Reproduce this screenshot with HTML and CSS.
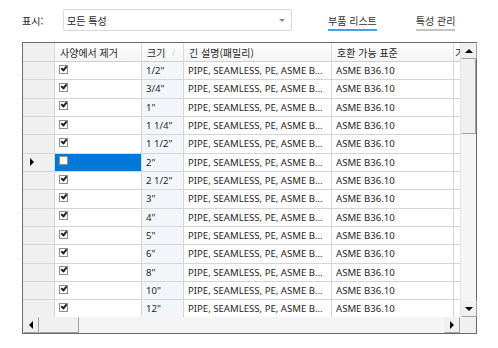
FILE: index.html
```html
<!DOCTYPE html>
<html lang="ko">
<head>
    <meta charset="UTF-8">
    <title>부품 리스트</title>
    <link rel="stylesheet" href="styles.css">
</head>
<body>

<div class="page">
    <!-- Filter bar -->
    <div class="toolbar">
        <span class="label">표시:</span>
        <div class="combo">
            <span>모든 특성</span>
            <span class="combo-arrow"></span>
        </div>
        <a class="tab active">부품 리스트</a>
        <a class="tab">특성 관리</a>
    </div>

    <!-- Parts grid -->
    <div class="grid-box">
        <div class="grid-view">
            <div class="row head">
                <div class="cell rh"></div>
                <div class="cell">사양에서 제거</div>
                <div class="cell">크기<span class="sort">/</span></div>
                <div class="cell">긴 설명(패밀리)</div>
                <div class="cell">호환 가능 표준</div>
                <div class="cell last">기</div>
            </div>
            <div class="row"><div class="cell rh"></div><div class="cell"><span class="chk on"></span></div><div class="cell size">1/2"</div><div class="cell">PIPE, SEAMLESS, PE, ASME B...</div><div class="cell">ASME B36.10</div><div class="cell"></div></div>
            <div class="row"><div class="cell rh"></div><div class="cell"><span class="chk on"></span></div><div class="cell size">3/4"</div><div class="cell">PIPE, SEAMLESS, PE, ASME B...</div><div class="cell">ASME B36.10</div><div class="cell"></div></div>
            <div class="row"><div class="cell rh"></div><div class="cell"><span class="chk on"></span></div><div class="cell size">1"</div><div class="cell">PIPE, SEAMLESS, PE, ASME B...</div><div class="cell">ASME B36.10</div><div class="cell"></div></div>
            <div class="row"><div class="cell rh"></div><div class="cell"><span class="chk on"></span></div><div class="cell size">1 1/4"</div><div class="cell">PIPE, SEAMLESS, PE, ASME B...</div><div class="cell">ASME B36.10</div><div class="cell"></div></div>
            <div class="row"><div class="cell rh"></div><div class="cell"><span class="chk on"></span></div><div class="cell size">1 1/2"</div><div class="cell">PIPE, SEAMLESS, PE, ASME B...</div><div class="cell">ASME B36.10</div><div class="cell"></div></div>
            <div class="row current"><div class="cell rh"><span class="pointer"></span></div><div class="cell selected"><span class="chk"></span></div><div class="cell size">2"</div><div class="cell">PIPE, SEAMLESS, PE, ASME B...</div><div class="cell">ASME B36.10</div><div class="cell"></div></div>
            <div class="row"><div class="cell rh"></div><div class="cell"><span class="chk on"></span></div><div class="cell size">2 1/2"</div><div class="cell">PIPE, SEAMLESS, PE, ASME B...</div><div class="cell">ASME B36.10</div><div class="cell"></div></div>
            <div class="row"><div class="cell rh"></div><div class="cell"><span class="chk on"></span></div><div class="cell size">3"</div><div class="cell">PIPE, SEAMLESS, PE, ASME B...</div><div class="cell">ASME B36.10</div><div class="cell"></div></div>
            <div class="row"><div class="cell rh"></div><div class="cell"><span class="chk on"></span></div><div class="cell size">4"</div><div class="cell">PIPE, SEAMLESS, PE, ASME B...</div><div class="cell">ASME B36.10</div><div class="cell"></div></div>
            <div class="row"><div class="cell rh"></div><div class="cell"><span class="chk on"></span></div><div class="cell size">5"</div><div class="cell">PIPE, SEAMLESS, PE, ASME B...</div><div class="cell">ASME B36.10</div><div class="cell"></div></div>
            <div class="row"><div class="cell rh"></div><div class="cell"><span class="chk on"></span></div><div class="cell size">6"</div><div class="cell">PIPE, SEAMLESS, PE, ASME B...</div><div class="cell">ASME B36.10</div><div class="cell"></div></div>
            <div class="row"><div class="cell rh"></div><div class="cell"><span class="chk on"></span></div><div class="cell size">8"</div><div class="cell">PIPE, SEAMLESS, PE, ASME B...</div><div class="cell">ASME B36.10</div><div class="cell"></div></div>
            <div class="row"><div class="cell rh"></div><div class="cell"><span class="chk on"></span></div><div class="cell size">10"</div><div class="cell">PIPE, SEAMLESS, PE, ASME B...</div><div class="cell">ASME B36.10</div><div class="cell"></div></div>
            <div class="row"><div class="cell rh"></div><div class="cell"><span class="chk on"></span></div><div class="cell size">12"</div><div class="cell">PIPE, SEAMLESS, PE, ASME B...</div><div class="cell">ASME B36.10</div><div class="cell"></div></div>
        </div>

        <!-- Vertical scrollbar -->
        <div class="vscroll">
            <div class="sb-btn"><span class="arr up"></span></div>
            <div class="sb-track">
                <div class="sb-thumb v"></div>
            </div>
            <div class="sb-btn"><span class="arr down"></span></div>
        </div>

        <!-- Horizontal scrollbar -->
        <div class="hscroll">
            <div class="sb-btn"><span class="arr left"></span></div>
            <div class="sb-track h">
                <div class="sb-thumb h"></div>
            </div>
            <div class="sb-btn"><span class="arr right"></span></div>
        </div>
        <div class="corner"></div>
    </div>
</div>

</body>
</html>
```

FILE: styles.css
```css
body {
    margin: 0;
    background: #fff;
    font-family: "Noto Sans", "Noto Sans CJK KR", sans-serif;
    font-size: 9.6px;
    color: #1e1e1e;
}
.page {
    padding: 9px 21px 0 22px;
}
.toolbar {
    display: flex;
    align-items: center;
    height: 22px;
}
.label {
    width: 41px;
    font-family: "Noto Sans CJK KR", sans-serif;
    font-size: 10px;
}
.combo {
    width: 218px;
    height: 20px;
    border: 1px solid #d9d9d9;
    border-radius: 2px;
    display: flex;
    align-items: center;
    justify-content: space-between;
    padding: 0 6px 0 3px;
    font-family: "Noto Sans CJK KR", sans-serif;
    font-size: 10px;
}
.combo-arrow {
    width: 0;
    height: 0;
    border-left: 3px solid transparent;
    border-right: 3px solid transparent;
    border-top: 3px solid #8a8a8a;
}
.tab {
    font-family: "Noto Sans CJK KR", sans-serif;
    font-size: 10px;
    padding: 3px 0 1px;
    border-bottom: 2px solid #c4c4c4;
    margin-left: 39px;
    color: #333;
}
.tab.active {
    border-bottom-color: #42a5e0;
    margin-left: 36px;
}

.grid-box {
    margin-top: 11px;
    width: 455px;
    height: 292px;
    box-sizing: border-box;
    border: 1px solid #6a6a6a;
    box-shadow: inset 1px 1px 0 #a0a0a0;
    display: grid;
    grid-template-columns: 1fr 16px;
    grid-template-rows: 1fr 16px;
    background: #fff;
}
.grid-view {
    overflow: hidden;
}
.row {
    display: grid;
    grid-template-columns: 32px 87px 42px 148px 122px 20px;
    height: 18.33px;
}
.row.head {
    height: 19px;
}
.cell {
    box-sizing: border-box;
    border-right: 1px solid #d6d6d6;
    border-bottom: 1px solid #d6d6d6;
    padding-left: 4px;
    display: flex;
    align-items: center;
    white-space: nowrap;
    overflow: hidden;
}
.head .cell {
    background: linear-gradient(#fdfdfd, #f4f4f4);
    font-family: "Noto Sans CJK KR", sans-serif;
    font-size: 10px;
    padding-left: 5px;
    border-right-color: #dcdcdc;
    border-bottom-color: #d0d0d0;
}
.head .cell.last {
    padding-left: 1px;
}
.cell.rh {
    background: #f0f0f0;
    padding-left: 0;
    justify-content: center;
}
.head .cell.rh {
    background: #f0f0f0;
}
.cell.size {
    background: #f2f6fb;
}
.cell.selected {
    background: #0078d7;
}
.sort {
    color: #b0b0b0;
    font-size: 7px;
    margin-left: 7px;
}
.pointer {
    width: 0;
    height: 0;
    border-top: 4px solid transparent;
    border-bottom: 4px solid transparent;
    border-left: 4px solid #000;
    margin-left: -14px;
}
.chk {
    width: 9px;
    height: 9px;
    box-sizing: border-box;
    border: 1px solid #8e8f8f;
    background: #fff;
    position: relative;
    margin-top: -3px;
}
.chk.on::after {
    content: "";
    position: absolute;
    left: 1px;
    top: 0;
    width: 4px;
    height: 2px;
    border-left: 2px solid #222;
    border-bottom: 2px solid #222;
    transform: rotate(-50deg);
}

/* scrollbars */
.vscroll, .hscroll {
    display: flex;
    background: #f0f0f0;
}
.vscroll {
    flex-direction: column;
    border-left: 1px solid #e4e4e4;
}
.sb-btn {
    width: 16px;
    height: 16px;
    flex: none;
    box-sizing: border-box;
    border: 1px solid #f0f0f0;
    border-right-color: #a0a0a0;
    border-bottom-color: #a0a0a0;
    background: #f0f0f0;
    display: flex;
    align-items: center;
    justify-content: center;
}
.sb-track {
    flex: 1;
    background: #f5f5f5;
    position: relative;
}
.sb-thumb.v {
    position: absolute;
    top: 0;
    left: 0;
    width: 15px;
    height: 75px;
    box-sizing: border-box;
    border: 1px solid #f0f0f0;
    border-right-color: #a0a0a0;
    border-bottom-color: #a0a0a0;
    background: #f0f0f0;
}
.sb-thumb.h {
    position: absolute;
    top: 0;
    left: 0;
    width: 40px;
    height: 16px;
    box-sizing: border-box;
    border: 1px solid #f0f0f0;
    border-right-color: #a0a0a0;
    border-bottom-color: #a0a0a0;
    background: #f0f0f0;
}
.arr {
    width: 0;
    height: 0;
}
.arr.up {
    border-left: 4px solid transparent;
    border-right: 4px solid transparent;
    border-bottom: 4px solid #000;
}
.arr.down {
    border-left: 4px solid transparent;
    border-right: 4px solid transparent;
    border-top: 4px solid #000;
}
.arr.left {
    border-top: 4px solid transparent;
    border-bottom: 4px solid transparent;
    border-right: 4px solid #000;
}
.arr.right {
    border-top: 4px solid transparent;
    border-bottom: 4px solid transparent;
    border-left: 4px solid #000;
}
.corner {
    background: #f0f0f0;
}
```
